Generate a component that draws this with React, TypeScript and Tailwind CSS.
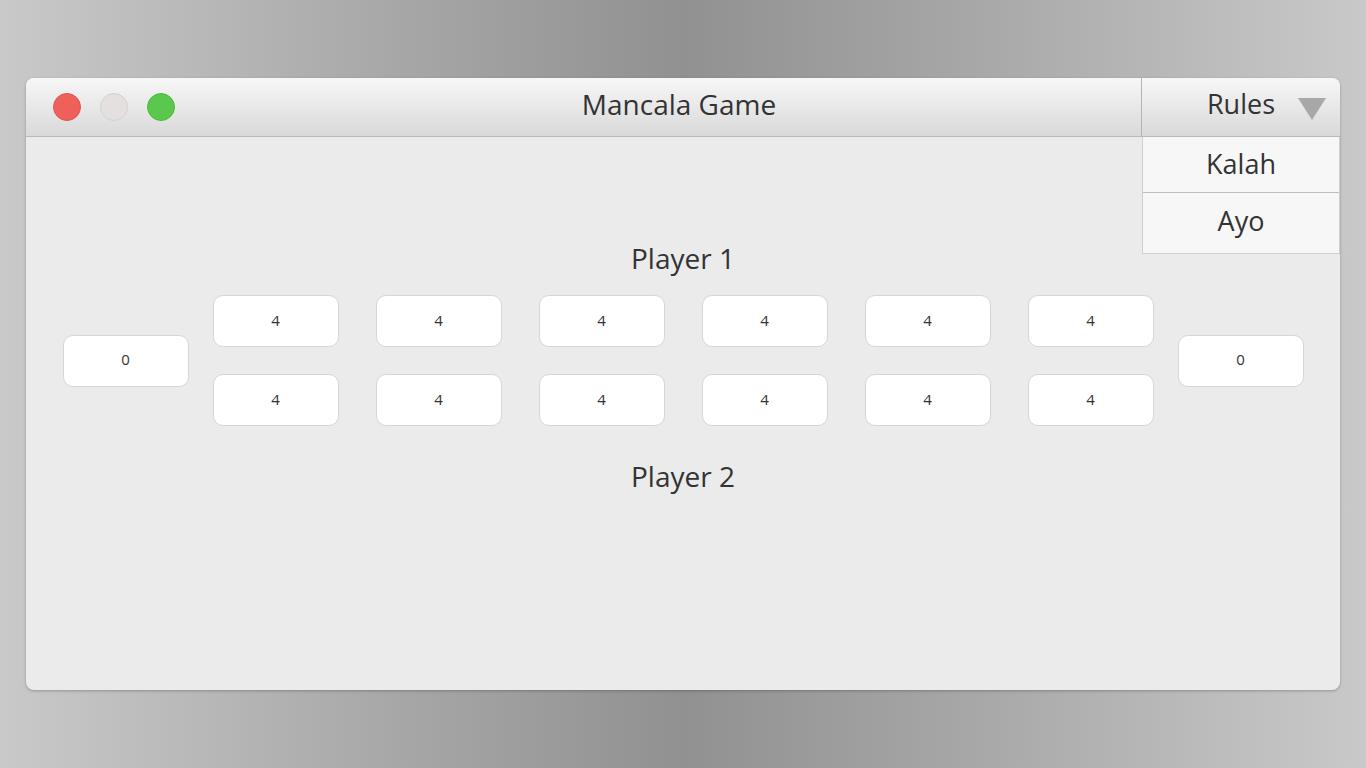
import React from 'react';

const FONT = { fontFamily: '"Open Sans", "Noto Sans", sans-serif' };

const Pit: React.FC<{ value: number }> = ({ value }) => (
  <div className="w-[126px] h-[52px] bg-white border border-[#d6d6d6] rounded-[10px] flex items-center justify-center text-[15px] text-[#333] pb-[2px]">
    {value}
  </div>
);

const App: React.FC = () => {
  const top = [4, 4, 4, 4, 4, 4];
  const bottom = [4, 4, 4, 4, 4, 4];

  return (
    <div
      className="w-[1366px] h-[768px] bg-[linear-gradient(to_right,#c9c9c9,#a6a6a6_30%,#919191_50%,#a6a6a6_70%,#c9c9c9)] pt-[78px] px-[26px]"
      style={FONT}
    >
      <div className="relative w-[1314px] h-[612px] rounded-[8px] bg-[#ebebeb] shadow-[0_1px_3px_rgba(0,0,0,0.25)] flex flex-col">
        {/* title bar */}
        <div className="h-[59px] rounded-t-[8px] bg-[linear-gradient(to_bottom,#f7f7f7,#d9d9d9)] border-b border-[#b9b9b9] grid grid-cols-[1fr_auto_1fr] items-center">
          <div className="flex items-center gap-[19px] pl-[27px]">
            <span className="w-[28px] h-[28px] rounded-full bg-[#f0605b] border border-[#e0524e]" />
            <span className="w-[28px] h-[28px] rounded-full bg-[#e3e0df] border border-[#d4d1d0]" />
            <span className="w-[28px] h-[28px] rounded-full bg-[#5ac84c] border border-[#4fb843]" />
          </div>
          <div className="text-[28px] text-[#333] -ml-[8px] -mt-[6px]">Mancala Game</div>
          <div className="flex justify-end h-full">
            <div className="relative w-[199px] h-full border-l border-[#b3b3b3] flex items-center justify-center">
              <span className="text-[27px] text-[#333] -mt-[6px]">Rules</span>
              <svg className="absolute right-[14px] top-[20px]" width="28" height="22" viewBox="0 0 28 22">
                <polygon points="0,0 28,0 14,22" fill="#a8a8a8" />
              </svg>
            </div>
          </div>
        </div>

        {/* dropdown menu */}
        <div className="absolute right-0 top-[59px] w-[198px] bg-[#f7f7f7] border border-[#cfcfcf] border-t-0 text-[27px] text-[#333] z-10">
          <div className="h-[56px] flex items-center justify-center border-b border-[#bdbdbd]">Kalah</div>
          <div className="h-[60px] flex items-center justify-center pb-[4px]">Ayo</div>
        </div>

        {/* board */}
        <div className="flex flex-col items-center pt-[102px]">
          <div className="text-[28px] text-[#333] leading-[38px]">Player 1</div>
          <div className="mt-[18px] flex items-center gap-[24px]">
            <Pit value={0} />
            <div className="flex flex-col gap-[27px]">
              <div className="flex gap-[37px]">
                {top.map((v, i) => (
                  <Pit key={i} value={v} />
                ))}
              </div>
              <div className="flex gap-[37px]">
                {bottom.map((v, i) => (
                  <Pit key={i} value={v} />
                ))}
              </div>
            </div>
            <Pit value={0} />
          </div>
          <div className="mt-[31px] text-[28px] text-[#333] leading-[38px]">Player 2</div>
        </div>
      </div>
    </div>
  );
};

export default App;
